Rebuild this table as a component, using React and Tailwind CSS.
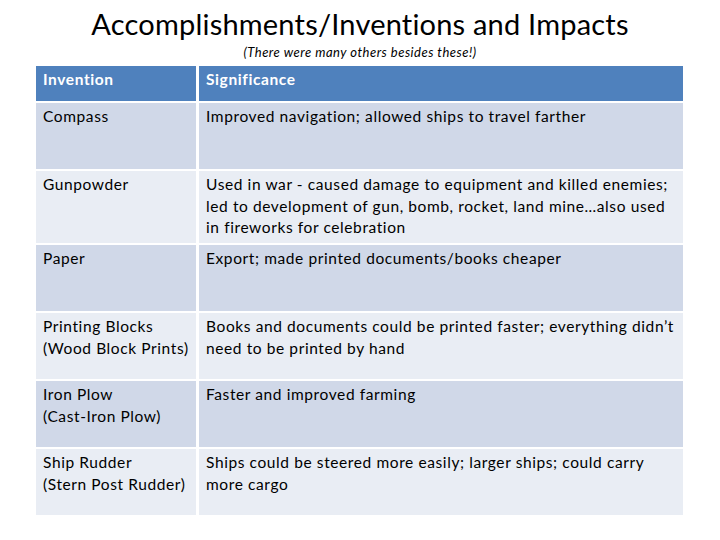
import React from 'react'

const ROWS = [
  { invention: ['Compass'], significance: 'Improved navigation; allowed ships to travel farther', h: 'h-[66px]', dark: true },
  {
    invention: ['Gunpowder'],
    significance:
      'Used in war - caused damage to equipment and killed enemies; led to development of gun, bomb, rocket, land mine…also used in fireworks for celebration',
    h: 'h-[72px]',
    dark: false,
  },
  { invention: ['Paper'], significance: 'Export; made printed documents/books cheaper', h: 'h-[66px]', dark: true },
  {
    invention: ['Printing Blocks', '(Wood Block Prints)'],
    significance: 'Books and documents could be printed faster; everything didn’t need to be printed by hand',
    h: 'h-[66px]',
    dark: false,
  },
  { invention: ['Iron Plow', '(Cast-Iron Plow)'], significance: 'Faster and improved farming', h: 'h-[66px]', dark: true },
  {
    invention: ['Ship Rudder', '(Stern Post Rudder)'],
    significance: 'Ships could be steered more easily; larger ships; could carry more cargo',
    h: 'h-[66px]',
    dark: false,
  },
]

function App() {
  return (
    <div className="w-[720px] h-[540px] bg-white font-['Lato',sans-serif] text-black overflow-hidden">
      <div className="pt-[7px] text-center">
        <h1 className="text-[29px] leading-[34px] tracking-[0.2px]">Accomplishments/Inventions and Impacts</h1>
        <p className="mt-[3px] text-[13px] leading-[16px] italic tracking-[0.5px]">(There were many others besides these!)</p>
      </div>

      <div className="mt-[6px] ml-[36px] w-[647px] grid grid-cols-[160px_1fr] gap-x-[3px] gap-y-[2px] text-[15.5px] leading-[21.5px] tracking-[0.6px]">
        <div className="h-[35px] bg-[#4f81bd] text-white font-bold px-[7px] pt-[3px]">Invention</div>
        <div className="h-[35px] bg-[#4f81bd] text-white font-bold px-[7px] pt-[3px]">Significance</div>

        {ROWS.map((row) => {
          const bg = row.dark ? 'bg-[#d0d8e8]' : 'bg-[#e9edf4]'
          return (
            <React.Fragment key={row.invention[0]}>
              <div className={`${row.h} ${bg} px-[7px] pt-[3px]`}>
                {row.invention.map((line) => (
                  <div key={line} className="whitespace-nowrap">{line}</div>
                ))}
              </div>
              <div className={`${row.h} ${bg} pl-[7px] pr-[6px] pt-[3px]`}>{row.significance}</div>
            </React.Fragment>
          )
        })}
      </div>
    </div>
  )
}

export default App
